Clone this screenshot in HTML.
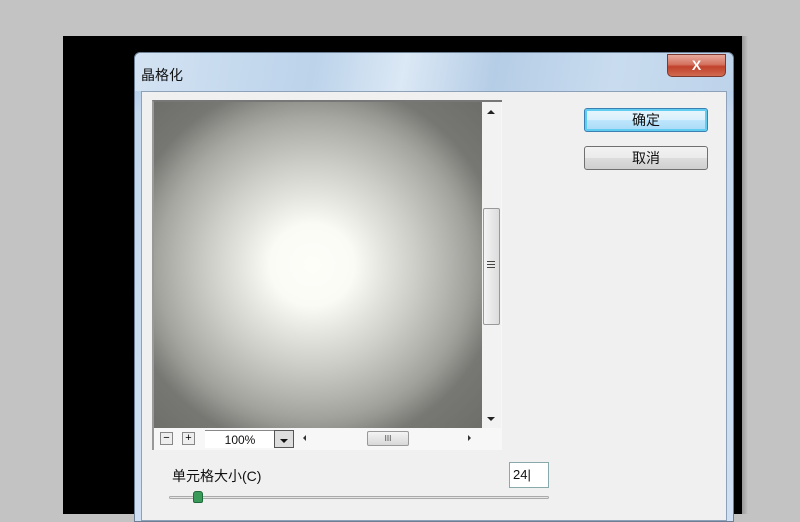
<!DOCTYPE html>
<html><head><meta charset="utf-8"><style>
*{margin:0;padding:0;box-sizing:border-box}
body{width:800px;height:514px;overflow:hidden;background:#c3c3c3;position:relative;font-family:"Liberation Sans","Noto Sans CJK SC",sans-serif}
.abs{position:absolute}
</style></head><body>
<div class="abs" style="left:63px;top:36px;width:679px;height:478px;background:#000"></div>
<div class="abs" style="left:742px;top:36px;width:6px;height:478px;background:linear-gradient(90deg,#999,#c3c3c3)"></div>
<div class="abs" style="left:134px;top:52px;width:600px;height:470px;border-radius:6px 6px 0 0;border:1px solid #6d7f95;background:linear-gradient(180deg,#c8dcef 0,#b9d1ea 40px,#c4d8ee 60px,#cfe0f2 470px)"></div>
<div class="abs" style="left:135px;top:53px;width:598px;height:38px;border-radius:6px 6px 0 0;background:linear-gradient(100deg,#d3e3f3 0%,#bcd3ea 30%,#dbe8f5 45%,#b5cde6 60%,#c9dcef 80%,#bdd3ea 100%)"></div>
<div class="abs" style="left:141px;top:68px;font-size:14px;color:#111;line-height:1">晶格化</div>
<div class="abs" style="left:667px;top:54px;width:59px;height:23px;border:1px solid #7a3a30;border-radius:0 0 5px 5px;background:linear-gradient(180deg,#e9a99c 0,#d4725f 45%,#c0412b 55%,#d06a50 100%);color:#fff;font-weight:bold;font-size:14px;text-align:center;line-height:20px">X</div>
<div class="abs" style="left:141px;top:91px;width:586px;height:430px;background:#f0f0f0;border:1px solid #8da2b8"></div>
<div class="abs" style="left:152px;top:100px;width:350px;height:350px;background:#f7f7f7;border-top:2px solid #777;border-left:2px solid #999"></div>
<div class="abs" style="left:154px;top:102px;width:328px;height:326px;background:radial-gradient(ellipse 190px 185px at 158px 163px,#fefef9 0%,#fbfbf6 22%,#e4e4df 38%,#cdcdc8 55%,#b4b4af 72%,#9a9a95 88%,#7e7e7a 100%)"></div>
<div class="abs" style="left:154px;top:102px;width:328px;height:326px;background:radial-gradient(ellipse 260px 250px at 160px 165px,rgba(0,0,0,0) 60%,rgba(40,40,36,.25) 100%)"></div>
<div class="abs" style="left:482px;top:102px;width:19px;height:326px;background:#f2f2f2"></div>
<div class="abs" style="left:487px;top:110px;width:0;height:0;border-left:4px solid transparent;border-right:4px solid transparent;border-bottom:4px solid #222"></div>
<div class="abs" style="left:487px;top:417px;width:0;height:0;border-left:4px solid transparent;border-right:4px solid transparent;border-top:4px solid #222"></div>
<div class="abs" style="left:483px;top:208px;width:17px;height:117px;border:1px solid #999;border-radius:2px;background:linear-gradient(90deg,#f4f4f4,#dcdcdc)"></div>
<div class="abs" style="left:487px;top:261px;width:8px;height:1px;background:#444;box-shadow:0 3px #444,0 6px #444"></div>
<div class="abs" style="left:160px;top:432px;width:13px;height:13px;border:1px solid #888;background:#eee;font-size:11px;line-height:10px;text-align:center">−</div>
<div class="abs" style="left:182px;top:432px;width:13px;height:13px;border:1px solid #888;background:#eee;font-size:11px;line-height:10px;text-align:center">+</div>
<div class="abs" style="left:205px;top:430px;width:70px;height:18px;background:#fff;border-top:1px solid #888;font-size:12px;line-height:18px;text-align:center;color:#111">100%</div>
<div class="abs" style="left:274px;top:430px;width:20px;height:18px;background:#ddd;border:1px solid #555"></div>
<div class="abs" style="left:280px;top:439px;width:0;height:0;border-left:4px solid transparent;border-right:4px solid transparent;border-top:4px solid #111"></div>
<div class="abs" style="left:303px;top:435px;width:0;height:0;border-top:3px solid transparent;border-bottom:3px solid transparent;border-right:3px solid #333"></div>
<div class="abs" style="left:468px;top:435px;width:0;height:0;border-top:3px solid transparent;border-bottom:3px solid transparent;border-left:3px solid #333"></div>
<div class="abs" style="left:367px;top:431px;width:42px;height:15px;border:1px solid #999;border-radius:2px;background:linear-gradient(#f4f4f4,#d8d8d8);font-size:8px;text-align:center;line-height:13px;color:#444">III</div>
<div class="abs" style="left:584px;top:108px;width:124px;height:24px;border:1px solid #3c7fb1;border-radius:3px;box-shadow:inset 0 0 0 2px #5fcdf0;background:linear-gradient(#eaf6fd,#d9f0fc 50%,#bee6fd 51%,#a7d9f5);font-size:14px;text-align:center;line-height:22px;color:#111">确定</div>
<div class="abs" style="left:584px;top:146px;width:124px;height:24px;border:1px solid #707070;border-radius:3px;background:linear-gradient(#f2f2f2,#ebebeb 50%,#dddddd 51%,#cfcfcf);font-size:14px;text-align:center;line-height:22px;color:#111">取消</div>
<div class="abs" style="left:172px;top:467px;font-size:14px;color:#111;line-height:18px">单元格大小(C)</div>
<div class="abs" style="left:509px;top:462px;width:40px;height:26px;background:#fff;border:1px solid #8aa;font-size:13px;line-height:24px;padding-left:3px;color:#111">24|</div>
<div class="abs" style="left:169px;top:496px;width:380px;height:3px;border:1px solid #aaa;border-radius:2px;background:#e6e6e6"></div>
<div class="abs" style="left:193px;top:491px;width:10px;height:12px;background:#3a9a5a;border-radius:3px 3px 2px 2px;border:1px solid #1f6a3a"></div>
</body></html>
